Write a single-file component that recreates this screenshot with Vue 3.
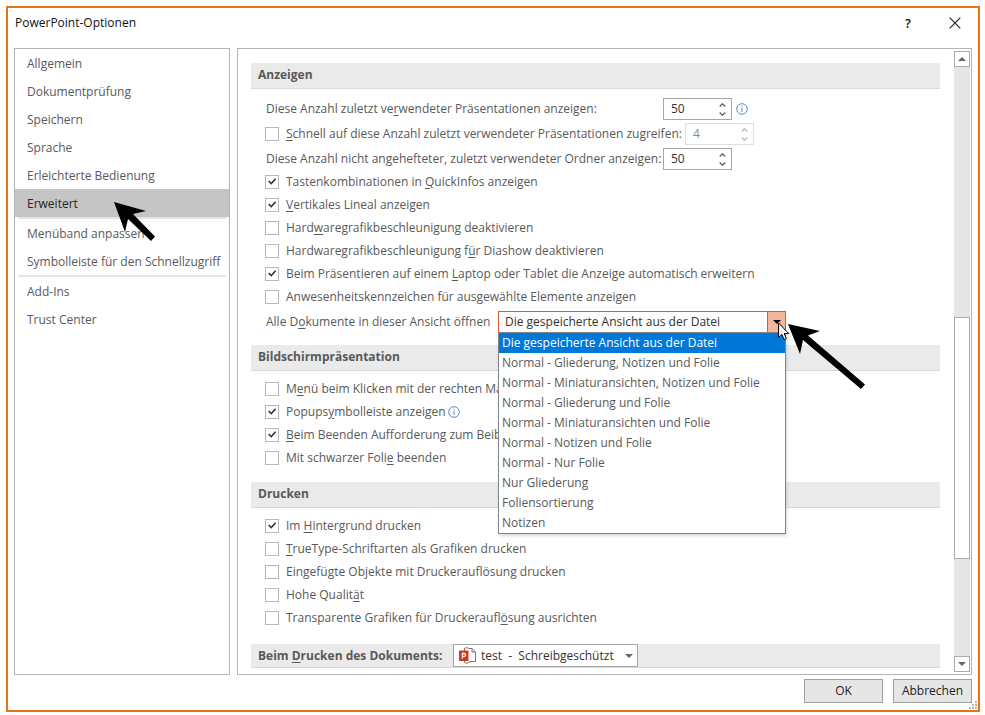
<script setup>
import { ref } from 'vue'

const nav = [
  ['Allgemein', 'Dokumentprüfung', 'Speichern', 'Sprache', 'Erleichterte Bedienung', 'Erweitert'],
  ['Menüband anpassen', 'Symbolleiste für den Schnellzugriff'],
  ['Add-Ins', 'Trust Center'],
]
const active = ref('Erweitert')

/* Each label is [before, access key, after]. */
const display = ref([
  { text: ['Tastenkombinationen in ', 'Q', 'uickInfos anzeigen'], on: true },
  { text: ['', 'V', 'ertikales Lineal anzeigen'], on: true },
  { text: ['Hard', 'w', 'aregrafikbeschleunigung deaktivieren'], on: false },
  { text: ['Hardwaregrafikbeschleunigung f', 'ü', 'r Diashow deaktivieren'], on: false },
  { text: ['Beim Präsentieren auf einem ', 'L', 'aptop oder Tablet die Anzeige automatisch erweitern'], on: true },
  { text: ['Anwesenheitskennzeichen für ausgewählte Elemente anzeigen', '', ''], on: false },
])
const show = ref([
  { text: ['M', 'e', 'nü beim Klicken mit der rechten Ma'], on: false },
  { text: ['Popups', 'y', 'mbolleiste anzeigen'], on: true, info: true },
  { text: ['', 'B', 'eim Beenden Aufforderung zum Beib'], on: true },
  { text: ['Mit schwarzer Foli', 'e', ' beenden'], on: false },
])
const print = ref([
  { text: ['Im ', 'H', 'intergrund drucken'], on: true },
  { text: ['', 'T', 'rueType-Schriftarten als Grafiken drucken'], on: false },
  { text: ['Eingefügte Ob', 'j', 'ekte mit Druckerauflösung drucken'], on: false },
  { text: ['Hohe Qualit', 'ä', 't'], on: false },
  { text: ['Transparente Grafiken für Druckeraufl', 'ö', 'sung ausrichten'], on: false },
])
const views = [
  'Die gespeicherte Ansicht aus der Datei',
  'Normal - Gliederung, Notizen und Folie',
  'Normal - Miniaturansichten, Notizen und Folie',
  'Normal - Gliederung und Folie',
  'Normal - Miniaturansichten und Folie',
  'Normal - Notizen und Folie',
  'Normal - Nur Folie',
  'Nur Gliederung',
  'Foliensortierung',
  'Notizen',
]
const view = ref(views[0])
const recent = ref('50')
const quick = ref('4')
const folders = ref('50')
const quickOn = ref(false)
</script>

<template>
  <div class="page">
    <div class="dialog">
      <header class="titlebar">
        <h1>PowerPoint-Optionen</h1>
        <button class="tool" aria-label="Hilfe">?</button>
        <button class="tool" aria-label="Schließen">
          <svg width="12" height="12" viewBox="0 0 12 12"><path d="M.7.7l10.6 10.6M11.3.7L.7 11.3" stroke="#222" stroke-width="1.2" /></svg>
        </button>
      </header>

      <div class="body">
        <nav class="side">
          <div v-for="(group, g) in nav" :key="g" class="group">
            <button v-for="n in group" :key="n" class="item" :class="{ active: n === active }" @click="active = n">{{ n }}</button>
          </div>
          <svg class="pointer side-pointer" width="44" height="42" viewBox="0 0 44 42">
            <path d="M1 1L33 10 20 13 42 35.500 38 40 15 18 12 31z" />
          </svg>
        </nav>

        <main class="main">
          <div class="content">
            <section>
              <h2>Anzeigen</h2>
              <div class="field">
                <label class="wide" for="recent">Diese Anzahl zuletzt ve<u>r</u>wendeter Präsentationen anzeigen:</label>
                <span class="spin">
                  <input id="recent" v-model="recent" type="text" />
                  <span class="steps">
                    <button aria-label="Mehr"><svg width="7" height="4" viewBox="0 0 7 4"><path d="M.7 3.500L3.500.8l2.800 2.700" /></svg></button>
                    <button aria-label="Weniger"><svg width="7" height="4" viewBox="0 0 7 4"><path d="M.7.5l2.800 2.700L6.300.5" /></svg></button>
                  </span>
                </span>
                <svg class="info" width="12" height="12" viewBox="0 0 12 12"><circle cx="6" cy="6" r="5.300" /><path d="M6 5v4M6 2.800v1.300" /></svg>
              </div>
              <div class="field second">
                <input id="quickOn" v-model="quickOn" type="checkbox" />
                <label class="quick" for="quickOn"><u>S</u>chnell auf diese Anzahl zuletzt verwendeter Präsentationen zugreifen:</label>
                <span class="spin off">
                  <input v-model="quick" type="text" disabled aria-label="Anzahl für Schnellzugriff" />
                  <span class="steps">
                    <button disabled aria-label="Mehr"><svg width="7" height="4" viewBox="0 0 7 4"><path d="M.7 3.500L3.500.8l2.800 2.700" /></svg></button>
                    <button disabled aria-label="Weniger"><svg width="7" height="4" viewBox="0 0 7 4"><path d="M.7.5l2.800 2.700L6.300.5" /></svg></button>
                  </span>
                </span>
              </div>
              <div class="field">
                <label class="wide" for="folders">Diese Anzahl nicht an<u>g</u>ehefteter, zuletzt verwendeter Ordner anzeigen:</label>
                <span class="spin">
                  <input id="folders" v-model="folders" type="text" />
                  <span class="steps">
                    <button aria-label="Mehr"><svg width="7" height="4" viewBox="0 0 7 4"><path d="M.7 3.500L3.500.8l2.800 2.700" /></svg></button>
                    <button aria-label="Weniger"><svg width="7" height="4" viewBox="0 0 7 4"><path d="M.7.5l2.800 2.700L6.300.5" /></svg></button>
                  </span>
                </span>
              </div>
              <div v-for="(o, i) in display" :key="i" class="check">
                <input :id="'d' + i" v-model="o.on" type="checkbox" />
                <label :for="'d' + i">{{ o.text[0] }}<u>{{ o.text[1] }}</u>{{ o.text[2] }}</label>
              </div>
              <div class="field view">
                <label class="viewlabel" for="view">Alle D<u>o</u>kumente in dieser Ansicht öffnen</label>
                <div class="combo">
                  <select id="view" v-model="view">
                    <option v-for="v in views" :key="v">{{ v }}</option>
                  </select>
                  <span class="drop"><svg width="8" height="4" viewBox="0 0 8 4"><path d="M0 0h8L4 4z" /></svg></span>
                  <ul class="list">
                    <li v-for="v in views" :key="v" :class="{ picked: v === view }" @click="view = v">{{ v }}</li>
                  </ul>
                  <svg class="cursor" width="12" height="19" viewBox="0 0 12 19">
                    <path d="M.6 1v14.500l3.300-3.100 2.200 5.200 2.300-1-2.200-5h4.600z" fill="#fff" stroke="#000" />
                  </svg>
                  <svg class="pointer view-pointer" width="80" height="68" viewBox="0 0 80 68">
                    <path d="M1 0L33 7 21 11.500 78 60.500 74 65 16 16 13 30z" />
                  </svg>
                </div>
              </div>
            </section>

            <section>
              <h2>Bildschirmpräsentation</h2>
              <div v-for="(o, i) in show" :key="i" class="check">
                <input :id="'s' + i" v-model="o.on" type="checkbox" />
                <label :for="'s' + i">{{ o.text[0] }}<u>{{ o.text[1] }}</u>{{ o.text[2] }}</label>
                <svg v-if="o.info" class="info" width="12" height="12" viewBox="0 0 12 12"><circle cx="6" cy="6" r="5.300" /><path d="M6 5v4M6 2.800v1.300" /></svg>
              </div>
            </section>

            <section>
              <h2>Drucken</h2>
              <div v-for="(o, i) in print" :key="i" class="check">
                <input :id="'p' + i" v-model="o.on" type="checkbox" />
                <label :for="'p' + i">{{ o.text[0] }}<u>{{ o.text[1] }}</u>{{ o.text[2] }}</label>
              </div>
            </section>

            <section>
              <h2 class="docbar">
                <label for="doc">Beim <u>D</u>rucken des Dokuments:</label>
                <span class="doc">
                  <svg class="ppt" width="18" height="17" viewBox="0 0 18 17">
                    <path d="M5.500 4V1.300L8 .6M5.500 13v2.500l2.500.9M10 1.500h3l3.500 3.500v9.500H11" fill="none" stroke="#777" />
                    <path d="M8 .6l2 .9M8 16.400l3-1.900M13 1.500V5h3.500" fill="none" stroke="#777" />
                    <path d="M0 3.500h9.500v10.500H0z" fill="#d03a1c" />
                    <path d="M3.400 11.500V6.500h1.800a1.400 1.400 0 0 1 0 2.800H3.400" fill="none" stroke="#fff" stroke-width="1.300" />
                  </svg>
                  <select id="doc"><option>test &nbsp;- &nbsp;Schreibgeschützt</option></select>
                  <svg class="caret" width="8" height="4" viewBox="0 0 8 4"><path d="M0 0h8L4 4z" /></svg>
                </span>
              </h2>
            </section>
          </div>
          <div class="scroll">
            <button aria-label="Nach oben"><svg width="8" height="4" viewBox="0 0 8 4"><path d="M0 4h8L4 0z" /></svg></button>
            <div class="track"><div class="thumb"></div></div>
            <button aria-label="Nach unten"><svg width="8" height="4" viewBox="0 0 8 4"><path d="M0 0h8L4 4z" /></svg></button>
          </div>
        </main>
      </div>

      <footer class="foot">
        <button>OK</button>
        <button>Abbrechen</button>
      </footer>
      <svg class="grip" width="9" height="9" viewBox="0 0 9 9">
        <path d="M6 0h2v2H6zM3 3h2v2H3zM6 3h2v2H6zM0 6h2v2H0zM3 6h2v2H3zM6 6h2v2H6z" fill="#bbb" />
      </svg>
    </div>
  </div>
</template>

<style>
body {
  background: #fff;
}
</style>

<style scoped>
* {
  box-sizing: border-box;
}
.page {
  padding: 6px 5px 4px 6px;
  font: 12px/16px "Open Sans", "Noto Sans", sans-serif;
  color: #595959;
}
button,
input,
select {
  font: inherit;
  color: inherit;
  margin: 0;
  border-radius: 0;
}
.dialog {
  position: relative;
  border: 2px solid #e87511;
  padding: 0 6px 7px;
}
.titlebar {
  display: flex;
  align-items: center;
  height: 40px;
  padding-bottom: 10px;
  color: #111;
}
h1 {
  flex: 1;
  margin: 0;
  padding-left: 1px;
  font-size: 12px;
  font-weight: 400;
}
.tool {
  display: flex;
  align-items: center;
  justify-content: center;
  width: 60px;
  height: 26px;
  padding: 0;
  border: 0;
  background: none;
  font-size: 13px;
  font-weight: 600;
}
.tool:last-child {
  width: 34px;
}
.body {
  display: flex;
  gap: 7px;
}
.side {
  position: relative;
  flex: none;
  width: 216px;
  border: 1px solid #b4b4b4;
}
.group + .group::before {
  content: "";
  display: block;
  height: 2px;
  margin: 0 3px;
  background: #e4e4e4;
}
.item {
  display: block;
  width: 100%;
  height: 28px;
  padding: 2px 12px 0;
  border: 0;
  background: none;
  text-align: left;
  white-space: nowrap;
}
.item.active {
  background: #c5c5c5;
  color: #262626;
}
.pointer {
  position: absolute;
  z-index: 3;
  fill: #000;
  pointer-events: none;
}
.side-pointer {
  left: 98px;
  top: 152px;
}
.main {
  flex: 1;
  min-width: 0;
  display: flex;
  gap: 14px;
  border: 1px solid #b4b4b4;
  padding: 2px 1px 2px 13px;
}
.content {
  flex: 1;
  min-width: 0;
  padding: 12px 0 4px;
}
section {
  padding-bottom: 12px;
}
section:nth-child(2) {
  padding-bottom: 13px;
}
section:nth-child(3) {
  padding-bottom: 15px;
}
section:last-child {
  padding-bottom: 0;
}
h2 {
  height: 26px;
  margin: 0 0 6px;
  padding: 0 7px;
  border-bottom: 1px solid #dadada;
  background: #eaeaea;
  font-size: 12px;
  font-weight: 700;
  line-height: 24px;
}
.field {
  display: flex;
  align-items: center;
  height: 22px;
  padding-left: 15px;
  white-space: nowrap;
}
section > h2 + .field {
  margin-top: 9px;
}
.second {
  margin: 3px 0;
  padding-left: 14px;
}
.wide {
  width: 397px;
}
.quick {
  width: 399px;
}
.viewlabel {
  width: 232px;
}
.view {
  margin-top: 3px;
}
.check {
  display: flex;
  align-items: center;
  height: 23px;
  padding-left: 14px;
  white-space: nowrap;
}
u {
  text-underline-offset: 2px;
}
input[type="checkbox"] {
  appearance: none;
  display: flex;
  flex: none;
  width: 14px;
  height: 14px;
  margin-right: 7px;
  border: 1px solid #b8b8b8;
  background: #fff;
}
input[type="checkbox"]:checked::before {
  content: "";
  flex: 1;
  background: #333;
  clip-path: polygon(17% 49%, 28% 42%, 43% 59%, 75% 23%, 85% 31%, 44% 78%);
}
.spin {
  display: flex;
  width: 69px;
  height: 22px;
  border: 1px solid #a6a6a6;
  background: #fff;
  color: #333;
}
.spin input {
  flex: 1;
  min-width: 0;
  padding: 0 0 0 7px;
  border: 0;
  background: none;
}
.spin.off {
  border-color: #dedede;
  color: #888;
}
.steps {
  display: flex;
  flex-direction: column;
  width: 18px;
  padding: 1px 0;
}
.steps button {
  display: flex;
  flex: 1;
  align-items: center;
  justify-content: center;
  padding: 0;
  border: 0;
  background: none;
}
.steps path {
  fill: none;
  stroke: #666;
  stroke-width: 1.400;
}
.off .steps path {
  stroke: #bbb;
}
.info {
  margin-left: 4px;
  fill: none;
  stroke: #5b8bd0;
}
.check .info {
  margin-left: 2px;
}
.combo {
  position: relative;
  display: flex;
  width: 288px;
  height: 22px;
  border: 1px solid #dc5939;
  background: #fdfdfd;
}
select {
  appearance: none;
  flex: 1;
  min-width: 0;
  padding: 0 0 0 6px;
  border: 0;
  background: none;
  color: #333;
  outline: 0;
}
.drop {
  display: flex;
  align-items: center;
  justify-content: center;
  width: 18px;
  border-left: 1px solid #dc5939;
  background: #f5b79c;
}
.list {
  position: absolute;
  z-index: 2;
  top: 20px;
  left: -1px;
  right: -1px;
  margin: 0;
  padding: 0;
  border: 1px solid #80868c;
  background: #fff;
  box-shadow: 1px 2px 3px rgba(0, 0, 0, 0.15);
  list-style: none;
  line-height: 20px;
}
.list li {
  padding-left: 3px;
}
.list .picked {
  background: #0078d7;
  color: #fff;
}
.cursor {
  position: absolute;
  z-index: 3;
  left: 279px;
  top: 10px;
}
.view-pointer {
  left: 288px;
  top: 12px;
}
.docbar {
  display: flex;
  align-items: center;
  height: 24px;
  margin: 0;
}
.docbar label {
  width: 195px;
}
.doc {
  display: flex;
  align-items: center;
  width: 185px;
  height: 23px;
  padding: 0 4px 0 5px;
  border: 1px solid #a6a6a6;
  background: #fff;
  font-weight: 400;
}
.doc select {
  padding-left: 4px;
}
.caret {
  fill: #666;
}
.scroll {
  display: flex;
  flex-direction: column;
  width: 16px;
  background: #e6e6e6;
}
.scroll button {
  display: flex;
  align-items: center;
  justify-content: center;
  height: 16px;
  padding: 0;
  border: 1px solid #ababab;
  background: #fff;
  fill: #666;
}
.track {
  display: grid;
  flex: 1;
  grid-template-rows: 250fr 242fr 97fr;
}
.thumb {
  grid-row: 2;
  border: 1px solid #ababab;
  background: #fff;
}
.foot {
  display: flex;
  justify-content: flex-end;
  gap: 10px;
  padding-top: 4px;
}
.foot button {
  width: 79px;
  height: 24px;
  padding: 0;
  border: 1px solid #a0a0a0;
  background: #e6e6e6;
  color: #222;
}
.grip {
  position: absolute;
  right: 0;
  bottom: 0;
}
</style>
